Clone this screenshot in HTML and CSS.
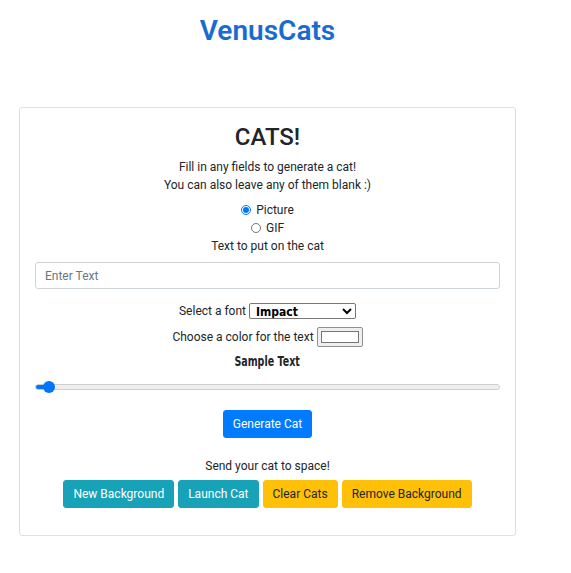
FILE: index.html
```html
<!DOCTYPE html>
<html lang="en">
<head>
<meta charset="utf-8">
<title>VenusCats</title>
<link rel="stylesheet" href="styles.css">
</head>
<body>
<div class="page">
  <h1 class="brand">VenusCats</h1>
  <div class="card">
    <h2 class="card-title">CATS!</h2>
    <p class="intro">Fill in any fields to generate a cat!<br>You can also leave any of them blank :)</p>
    <div class="radios">
      <label class="radio"><input type="radio" name="kind" checked> Picture</label>
      <label class="radio"><input type="radio" name="kind"> GIF</label>
    </div>
    <div class="line">Text to put on the cat</div>
    <input class="text-input" type="text" placeholder="Enter Text">
    <div class="row row-select">
      <span>Select a font</span>
      <select class="font-select">
        <option>Impact</option>
        <option>Arial</option>
        <option>Comic Sans</option>
      </select>
    </div>
    <div class="row row-color">
      <span>Choose a color for the text</span>
      <span class="color-box"><span class="swatch"></span></span>
    </div>
    <div class="sample"><span class="sample-text">Sample Text</span></div>
    <input class="slider" type="range" min="0" max="200" value="3">
    <div class="center">
      <button class="btn btn-primary">Generate Cat</button>
    </div>
    <div class="line send">Send your cat to space!</div>
    <div class="btn-row">
      <button class="btn btn-info">New Background</button>
      <button class="btn btn-info">Launch Cat</button>
      <button class="btn btn-warning">Clear Cats</button>
      <button class="btn btn-warning">Remove Background</button>
    </div>
  </div>
</div>
</body>
</html>
```
FILE: styles.css
```css
* { box-sizing: border-box; }
html, body { margin: 0; padding: 0; background: #fff; }
body {
  font-family: Roboto, "Liberation Sans", sans-serif;
  font-size: 12px;
  line-height: 18px;
  color: #212529;
}
.page {
  width: 497px;
  margin-left: 19px;
  padding-top: 13px;
}
.brand {
  margin: 0;
  text-align: center;
  font-size: 28px;
  line-height: 36px;
  font-weight: 600;
  color: #1a6bd1;
}
.card {
  margin-top: 58px;
  border: 1px solid #dfdfdf;
  border-radius: 3px;
  padding: 15px 15px 27px;
  display: flex;
  flex-direction: column;
  text-align: center;
}
.card-title {
  margin: 0 0 6px;
  font-size: 24px;
  line-height: 29px;
  font-weight: 500;
}
.intro { margin: 0; }
.radios {
  margin-top: 7px;
  display: flex;
  flex-direction: column;
  align-items: center;
}
.radio {
  display: flex;
  align-items: center;
  height: 18px;
}
.radio input {
  width: 10px;
  height: 10px;
  margin: 0 5px 0 0;
  accent-color: #0075ff;
}
.line { height: 18px; }
.text-input {
  margin-top: 7px;
  height: 27px;
  width: 100%;
  border: 1px solid #ced4da;
  border-radius: 3px;
  padding: 0 9px;
  font: inherit;
  color: #495057;
}
.text-input::placeholder { color: #6c757d; }
.row {
  display: flex;
  justify-content: center;
  align-items: center;
  gap: 3px;
}
.row-select { margin-top: 13px; height: 18px; }
.font-select {
  width: 107px;
  height: 16px;
  padding: 0 0 0 2px;
  border: 1px solid #767676;
  border-radius: 2px;
  font-family: Impact, "Liberation Sans Narrow", "DejaVu Sans", sans-serif;
  font-stretch: condensed;
  font-weight: bold;
  font-size: 12px;
  line-height: 14px;
  color: #000;
  background: #fff;
}
.row-color { margin-top: 7px; height: 20px; }
.color-box {
  display: inline-flex;
  width: 46px;
  height: 20px;
  padding: 3px;
  border: 1px solid #8f8f8f;
  border-radius: 2px;
  background: #efefef;
}
.swatch {
  flex: 1;
  border: 1px solid #777;
  background: #fff;
}
.sample {
  margin-top: 5px;
  height: 18px;
}
.sample-text {
  display: inline-block;
  font-family: Impact, "DejaVu Sans", sans-serif;
  font-weight: 900;
  font-size: 14px;
  line-height: 18px;
  color: #212529;
  transform: scaleX(0.68);
}
.slider {
  -webkit-appearance: none;
  appearance: none;
  margin: 11px 0 0;
  width: 100%;
  height: 12px;
  background: transparent;
}
.slider::-webkit-slider-runnable-track {
  height: 6px;
  border-radius: 3px;
  border: 1px solid #cfcfcf;
  background: linear-gradient(to right, #0075ff 0 10px, #efefef 10px);
}
.slider::-webkit-slider-thumb {
  -webkit-appearance: none;
  appearance: none;
  width: 12px;
  height: 12px;
  margin-top: -4px;
  border-radius: 50%;
  background: #0075ff;
  border: none;
}
.center { margin-top: 17px; display: flex; justify-content: center; }
.btn {
  font: inherit;
  height: 28px;
  padding: 0 9px;
  border: 1px solid transparent;
  border-radius: 3px;
  cursor: pointer;
}
.btn-primary { background: #007bff; border-color: #007bff; color: #fff; }
.btn-info { background: #17a2b8; border-color: #17a2b8; color: #fff; }
.btn-warning { background: #ffc107; border-color: #ffc107; color: #212529; }
.send { margin-top: 19px; }
.btn-row {
  margin-top: 5px;
  display: flex;
  justify-content: center;
  gap: 4px;
}
```
